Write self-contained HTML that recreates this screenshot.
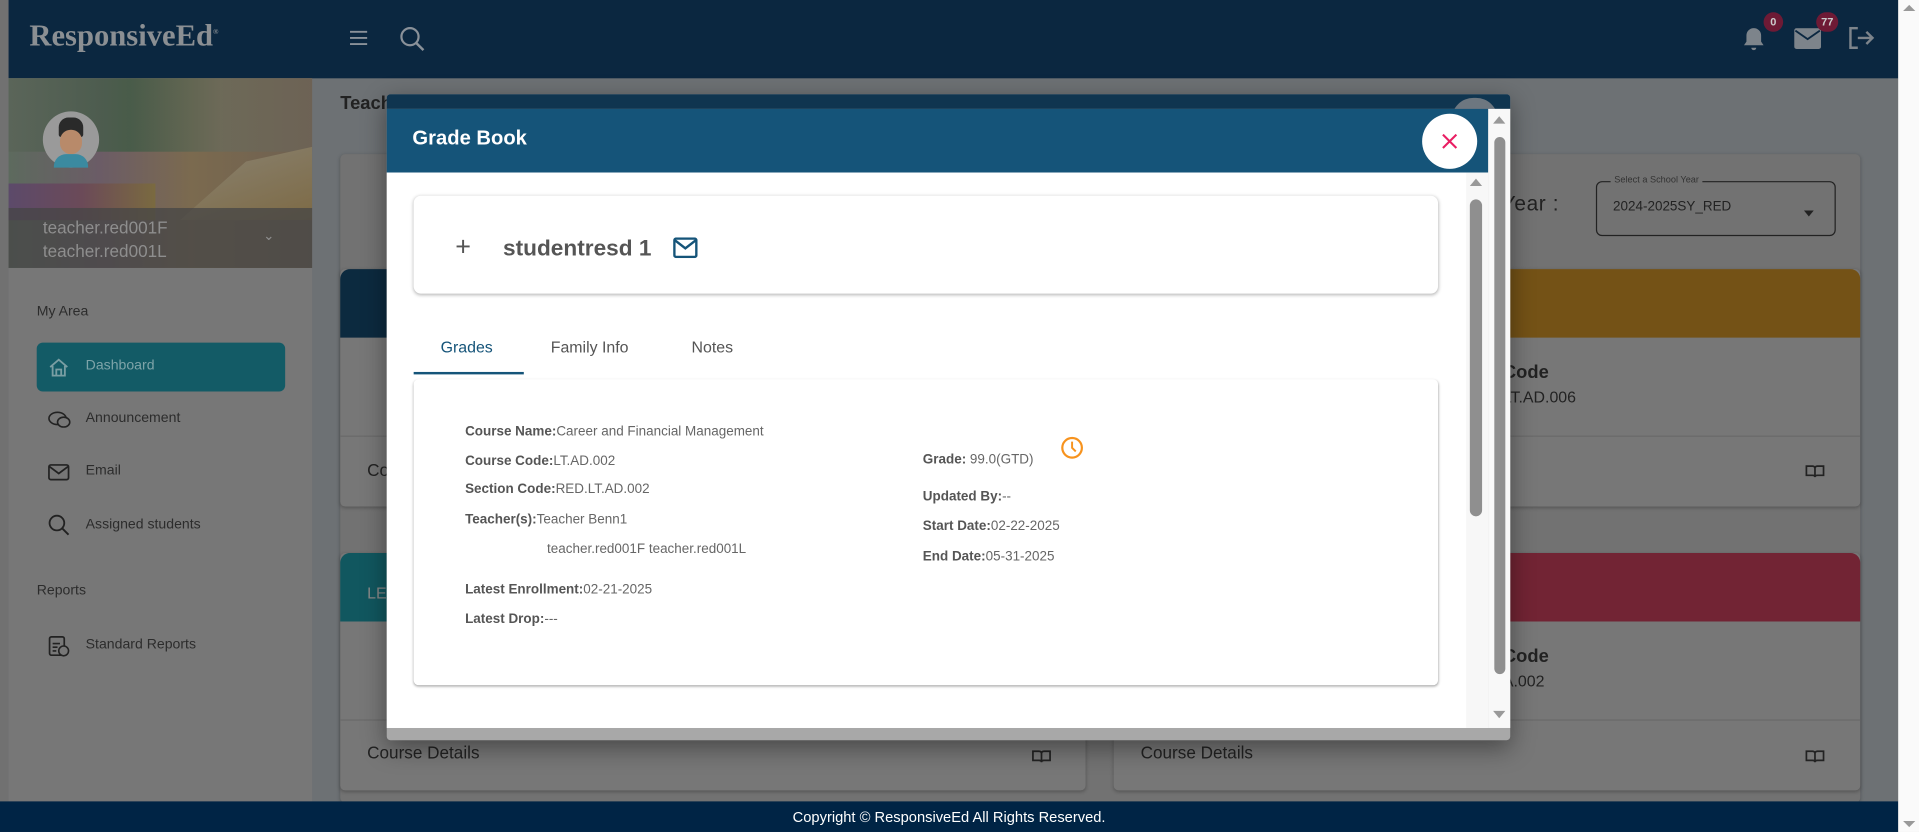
<!DOCTYPE html>
<html><head><meta charset="utf-8"><style>
html,body{margin:0;padding:0;width:1919px;height:832px;overflow:hidden;background:#6f7173;font-family:"Liberation Sans",sans-serif}
#w{position:absolute;left:0;top:0;width:1568px;height:680px;transform:scale(1.22385,1.2235);transform-origin:0 0;background:#6d7174;overflow:hidden}
.a{position:absolute}
.card{position:absolute;background:#777;border-radius:4px;box-shadow:0 1px 3px rgba(0,0,0,.25)}
.lbl{font-weight:bold;color:#555}
.dt{position:absolute;font-size:11px;color:#666;white-space:nowrap}
</style></head><body><div id="w">
<div class="a" style="left:0;top:0;width:7px;height:655px;background:#717171"></div>
<div class="a" style="left:7px;top:0;width:1544px;height:64px;background:#0b2740"></div>
<div class="a" style="left:24px;top:16px;font-family:'Liberation Serif',serif;font-weight:bold;font-size:25px;color:#8b8f93">ResponsiveEd<sup style="font-size:6px">®</sup></div>
<svg class="a" style="left:285px;top:24px" width="16" height="14"><path d="M1 2h14M1 7h14M1 12h14" stroke="#8a9199" stroke-width="1.6"/></svg>
<svg class="a" style="left:326px;top:21px" width="22" height="22"><circle cx="9" cy="9" r="7" fill="none" stroke="#8a9199" stroke-width="1.8"/><path d="M14 14l6 6" stroke="#8a9199" stroke-width="2"/></svg>
<svg class="a" style="left:1423px;top:21px" width="20" height="22"><path d="M10 2a6 6 0 0 1 6 6v5l2 3H2l2-3V8a6 6 0 0 1 6-6z M8 18h4a2 2 0 0 1-4 0z" fill="#7d848b"/></svg>
<div class="a" style="left:1441px;top:10px;width:16px;height:16px;border-radius:8px;background:#6e1a35;color:#ccc;font-size:9px;font-weight:bold;text-align:center;line-height:16px">0</div>
<svg class="a" style="left:1466px;top:23px" width="22" height="17"><rect x="0" y="0" width="22" height="17" rx="2" fill="#7d848b"/><path d="M1 2l10 7 10-7" stroke="#0b2740" stroke-width="1.5" fill="none"/></svg>
<div class="a" style="left:1484px;top:10px;width:18px;height:16px;border-radius:8px;background:#6e1a35;color:#ccc;font-size:9px;font-weight:bold;text-align:center;line-height:16px">77</div>
<svg class="a" style="left:1510px;top:22px" width="22" height="18"><path d="M8 1H2v16h6M8 9h12M15 4l5 5-5 5" stroke="#7d848b" stroke-width="2" fill="none"/></svg>
<div class="a" style="left:7px;top:64px;width:248px;height:591px;background:#777"></div>
<div class="a" style="left:7px;top:64px;width:248px;height:155px;background:linear-gradient(90deg,#5d6a5e,#6b5c66 30%,#7b6a4f 60%,#6e6050);"></div>
<div class="a" style="left:7px;top:64px;width:248px;height:60px;background:linear-gradient(90deg,#5a6458,#3f5a44 40%,#6a6a5a 70%,#6d6356);opacity:.8"></div>
<div class="a" style="left:7px;top:150px;width:120px;height:30px;background:linear-gradient(90deg,#5c4a6a,#6b4a58,#7a6a40)"></div>
<div class="a" style="left:120px;top:120px;width:135px;height:60px;background:linear-gradient(160deg,#8b8576,#7d6a45);clip-path:polygon(20% 100%,60% 20%,100% 0,100% 100%)"></div>
<div class="a" style="left:35px;top:91px;width:46px;height:46px;border-radius:23px;background:#9a9a9a"></div>
<div class="a" style="left:48px;top:96px;width:20px;height:16px;border-radius:8px 8px 2px 2px;background:#2a2a2a"></div>
<div class="a" style="left:49px;top:106px;width:18px;height:20px;border-radius:9px;background:#b88a6a"></div>
<div class="a" style="left:44px;top:126px;width:28px;height:11px;border-radius:10px 10px 0 0;background:#3b8aa0"></div>
<div class="a" style="left:7px;top:170px;width:248px;height:49px;background:rgba(70,70,70,.75)"></div>
<div class="a" style="left:35px;top:177px;font-size:14px;color:#8e8e8e;line-height:19px">teacher.red001F<br>teacher.red001L</div>
<div class="a" style="left:215px;top:186px;font-size:11px;color:#8e8e8e">⌄</div>
<div class="a" style="left:30px;top:249px;font-size:11.5px;color:#2c2c2c">My Area</div>
<div class="a" style="left:30px;top:280px;width:203px;height:40px;border-radius:5px;background:#135b66"></div>
<svg class="a" style="left:39px;top:291px" width="18" height="18"><path d="M2 9L9 3l7 6M4 8v8h10V8M7 16v-5h4v5" stroke="#7a9ea3" stroke-width="1.5" fill="none"/></svg>
<div class="a" style="left:70px;top:293px;font-size:11.5px;color:#7ea4a9">Dashboard</div>
<svg class="a" style="left:39px;top:335px" width="20" height="16"><ellipse cx="8" cy="7" rx="7" ry="5" fill="none" stroke="#222" stroke-width="1.3"/><ellipse cx="13" cy="10" rx="5" ry="4" fill="#777" stroke="#222" stroke-width="1.3"/></svg>
<div class="a" style="left:70px;top:336px;font-size:11.5px;color:#2c2c2c">Announcement</div>
<svg class="a" style="left:39px;top:379px" width="18" height="14"><rect x="1" y="1" width="16" height="12" rx="1.5" fill="none" stroke="#222" stroke-width="1.4"/><path d="M1 2l8 6 8-6" fill="none" stroke="#222" stroke-width="1.4"/></svg>
<div class="a" style="left:70px;top:379px;font-size:11.5px;color:#2c2c2c">Email</div>
<svg class="a" style="left:39px;top:420px" width="18" height="18"><circle cx="7.5" cy="7.5" r="6" fill="none" stroke="#222" stroke-width="1.5"/><path d="M12 12l5 5" stroke="#222" stroke-width="1.6"/></svg>
<div class="a" style="left:70px;top:423px;font-size:11.5px;color:#2c2c2c">Assigned students</div>
<div class="a" style="left:30px;top:477px;font-size:11.5px;color:#2c2c2c">Reports</div>
<svg class="a" style="left:39px;top:518px" width="18" height="19"><rect x="1.5" y="2.5" width="12" height="15" rx="1.5" fill="none" stroke="#222" stroke-width="1.4"/><path d="M4 8h6M4 11h4M4 14h3" stroke="#222" stroke-width="1.3"/><circle cx="13" cy="14" r="4" fill="#777" stroke="#222" stroke-width="1.3"/></svg>
<div class="a" style="left:70px;top:521px;font-size:11.5px;color:#2c2c2c">Standard Reports</div>
<div class="a" style="left:278px;top:76px;font-size:15px;font-weight:bold;color:#222">Teacher Dashboard</div>
<div class="card" style="left:278px;top:126px;width:1242px;height:530px;background:#727272"></div>
<div class="a" style="left:1208px;top:157px;font-size:17px;color:#222;letter-spacing:.5px">ol Year :</div>
<div class="a" style="left:1304px;top:148px;width:194px;height:43px;border:1px solid #222;border-radius:5px"></div>
<div class="a" style="left:1316px;top:142px;font-size:7.5px;color:#333;background:#727272;padding:0 3px">Select a School Year</div>
<div class="a" style="left:1318px;top:163px;font-size:11px;color:#222">2024-2025SY_RED</div>
<div class="a" style="left:1474px;top:172px;width:0;height:0;border:4px solid transparent;border-top:5px solid #222"></div>
<div class="card" style="left:278px;top:220px;width:609px;height:194px"></div>
<div class="a" style="left:278px;top:220px;width:609px;height:56px;background:#0c2a3f;border-radius:8px 8px 0 0"></div>
<div class="a" style="left:278px;top:356px;width:609px;height:1px;background:#6a6a6a"></div>
<div class="a" style="left:300px;top:376px;font-size:14px;color:#222">Course Details</div>
<div class="card" style="left:910px;top:220px;width:610px;height:194px"></div>
<div class="a" style="left:910px;top:220px;width:610px;height:56px;background:#745216;border-radius:8px 8px 0 0"></div>
<div class="a" style="left:1228px;top:296px;font-size:15px;font-weight:bold;color:#222">Code</div>
<div class="a" style="left:1228px;top:317px;font-size:13px;color:#222">LT.AD.006</div>
<div class="a" style="left:910px;top:356px;width:610px;height:1px;background:#6a6a6a"></div>
<svg class="a" style="left:1475px;top:379px" width="16" height="12"><path d="M1 2h5q2 0 2 2v7q0-1.5-2-1.5H1zM15 2h-5q-2 0-2 2v7q0-1.5 2-1.5h5z" fill="none" stroke="#222" stroke-width="1.4"/></svg>
<div class="card" style="left:278px;top:452px;width:609px;height:194px"></div>
<div class="a" style="left:278px;top:452px;width:609px;height:56px;background:#11575f;border-radius:8px 8px 0 0"></div>
<div class="a" style="left:300px;top:477px;font-size:13px;color:#888">LE</div>
<div class="a" style="left:278px;top:588px;width:609px;height:1px;background:#6a6a6a"></div>
<div class="a" style="left:300px;top:607px;font-size:14px;color:#222">Course Details</div>
<svg class="a" style="left:843px;top:612px" width="16" height="12"><path d="M1 2h5q2 0 2 2v7q0-1.5-2-1.5H1zM15 2h-5q-2 0-2 2v7q0-1.5 2-1.5h5z" fill="none" stroke="#222" stroke-width="1.4"/></svg>
<div class="card" style="left:910px;top:452px;width:610px;height:194px"></div>
<div class="a" style="left:910px;top:452px;width:610px;height:56px;background:#722434;border-radius:8px 8px 0 0"></div>
<div class="a" style="left:1228px;top:528px;font-size:15px;font-weight:bold;color:#222">Code</div>
<div class="a" style="left:1228px;top:549px;font-size:13px;color:#222">A.002</div>
<div class="a" style="left:910px;top:588px;width:610px;height:1px;background:#6a6a6a"></div>
<div class="a" style="left:932px;top:607px;font-size:14px;color:#222">Course Details</div>
<svg class="a" style="left:1475px;top:612px" width="16" height="12"><path d="M1 2h5q2 0 2 2v7q0-1.5-2-1.5H1zM15 2h-5q-2 0-2 2v7q0-1.5 2-1.5h5z" fill="none" stroke="#222" stroke-width="1.4"/></svg>
<div class="a" style="left:316px;top:77px;width:918px;height:528px;background:#a8a8a8;box-shadow:0 6px 20px rgba(0,0,0,.4);border-radius:3px"></div>
<div class="a" style="left:316px;top:77px;width:918px;height:12px;background:#0f3550;border-radius:3px 3px 0 0"></div>
<div class="a" style="left:1186px;top:80px;width:38px;height:18px;border-radius:19px 19px 0 0;background:#6d7780"></div>
<div class="a" style="left:316px;top:89px;width:900px;height:52px;background:#155479"></div>
<div class="a" style="left:337px;top:104px;font-size:16.5px;font-weight:bold;color:#fff">Grade Book</div>
<div class="a" style="left:1216px;top:89px;width:18px;height:506px;background:#f8f8f8"></div>
<div class="a" style="left:1221px;top:112px;width:9px;height:439px;border-radius:5px;background:#8f8f8f"></div>
<div class="a" style="left:1220px;top:95px;border:5px solid transparent;border-bottom:6px solid #999;border-top:0"></div>
<div class="a" style="left:1220px;top:581px;border:5px solid transparent;border-top:6px solid #999;border-bottom:0"></div>
<div class="a" style="left:1162px;top:93px;width:45px;height:45px;border-radius:23px;background:#fff"></div>
<svg class="a" style="left:1177px;top:108px" width="15" height="15"><path d="M2 2l11 11M13 2L2 13" stroke="#e91e63" stroke-width="1.7"/></svg>
<div class="a" style="left:316px;top:141px;width:900px;height:454px;background:#fff"></div>
<div class="a" style="left:1198px;top:141px;width:18px;height:454px;background:#f7f7f7"></div>
<div class="a" style="left:1201px;top:163px;width:10px;height:259px;border-radius:5px;background:#8f8f8f"></div>
<div class="a" style="left:1201px;top:146px;border:5px solid transparent;border-bottom:6px solid #999;border-top:0"></div>
<div class="a" style="left:338px;top:160px;width:837px;height:80px;background:#fff;border-radius:6px;box-shadow:0 1px 3px rgba(0,0,0,.3)"></div>
<div class="a" style="left:372px;top:189px;font-size:22px;color:#555;font-weight:300">+</div>
<div class="a" style="left:411px;top:192px;font-size:18.5px;font-weight:bold;color:#555">studentresd 1</div>
<svg class="a" style="left:550px;top:194px" width="20" height="17"><rect x="1" y="1" width="18" height="15" rx="1.5" fill="none" stroke="#155479" stroke-width="2"/><path d="M1 2l9 7 9-7" fill="none" stroke="#155479" stroke-width="2"/></svg>
<div class="a" style="left:360px;top:276px;font-size:13px;color:#155479">Grades</div>
<div class="a" style="left:450px;top:276px;font-size:13px;color:#555">Family Info</div>
<div class="a" style="left:565px;top:276px;font-size:13px;color:#555">Notes</div>
<div class="a" style="left:338px;top:304px;width:90px;height:2px;background:#155479"></div>
<div class="a" style="left:338px;top:310px;width:837px;height:250px;background:#fff;border-radius:4px;box-shadow:0 1px 2px rgba(0,0,0,.35)"></div>
<div class="dt" style="left:380px;top:347px"><span class="lbl">Course Name:</span>Career and Financial Management</div>
<div class="dt" style="left:380px;top:371px"><span class="lbl">Course Code:</span>LT.AD.002</div>
<div class="dt" style="left:380px;top:394px"><span class="lbl">Section Code:</span>RED.LT.AD.002</div>
<div class="dt" style="left:380px;top:419px"><span class="lbl">Teacher(s):</span>Teacher Benn1</div>
<div class="dt" style="left:447px;top:443px">teacher.red001F teacher.red001L</div>
<div class="dt" style="left:380px;top:476px"><span class="lbl">Latest Enrollment:</span>02-21-2025</div>
<div class="dt" style="left:380px;top:500px"><span class="lbl">Latest Drop:</span>---</div>
<div class="dt" style="left:754px;top:370px"><span class="lbl">Grade:</span> 99.0(GTD)</div>
<svg class="a" style="left:866px;top:356px" width="20" height="20"><circle cx="10" cy="10" r="8" fill="none" stroke="#f7931e" stroke-width="1.8"/><path d="M10 5v5l3 3" fill="none" stroke="#f7931e" stroke-width="1.6"/></svg>
<div class="dt" style="left:754px;top:400px"><span class="lbl">Updated By:</span>--</div>
<div class="dt" style="left:754px;top:424px"><span class="lbl">Start Date:</span>02-22-2025</div>
<div class="dt" style="left:754px;top:449px"><span class="lbl">End Date:</span>05-31-2025</div>
<div class="a" style="left:0;top:655px;width:1551px;height:25px;background:#002445;color:#fff;font-size:12px;text-align:center;line-height:27px">Copyright © ResponsiveEd All Rights Reserved.</div>
<div class="a" style="left:1551px;top:0;width:17px;height:680px;background:#fafafa"></div>
<div class="a" style="left:1555px;top:4px;border:5px solid transparent;border-bottom:5px solid #999;border-top:0"></div>
<div class="a" style="left:1555px;top:671px;border:5px solid transparent;border-top:5px solid #999;border-bottom:0"></div>
</div></body></html>
